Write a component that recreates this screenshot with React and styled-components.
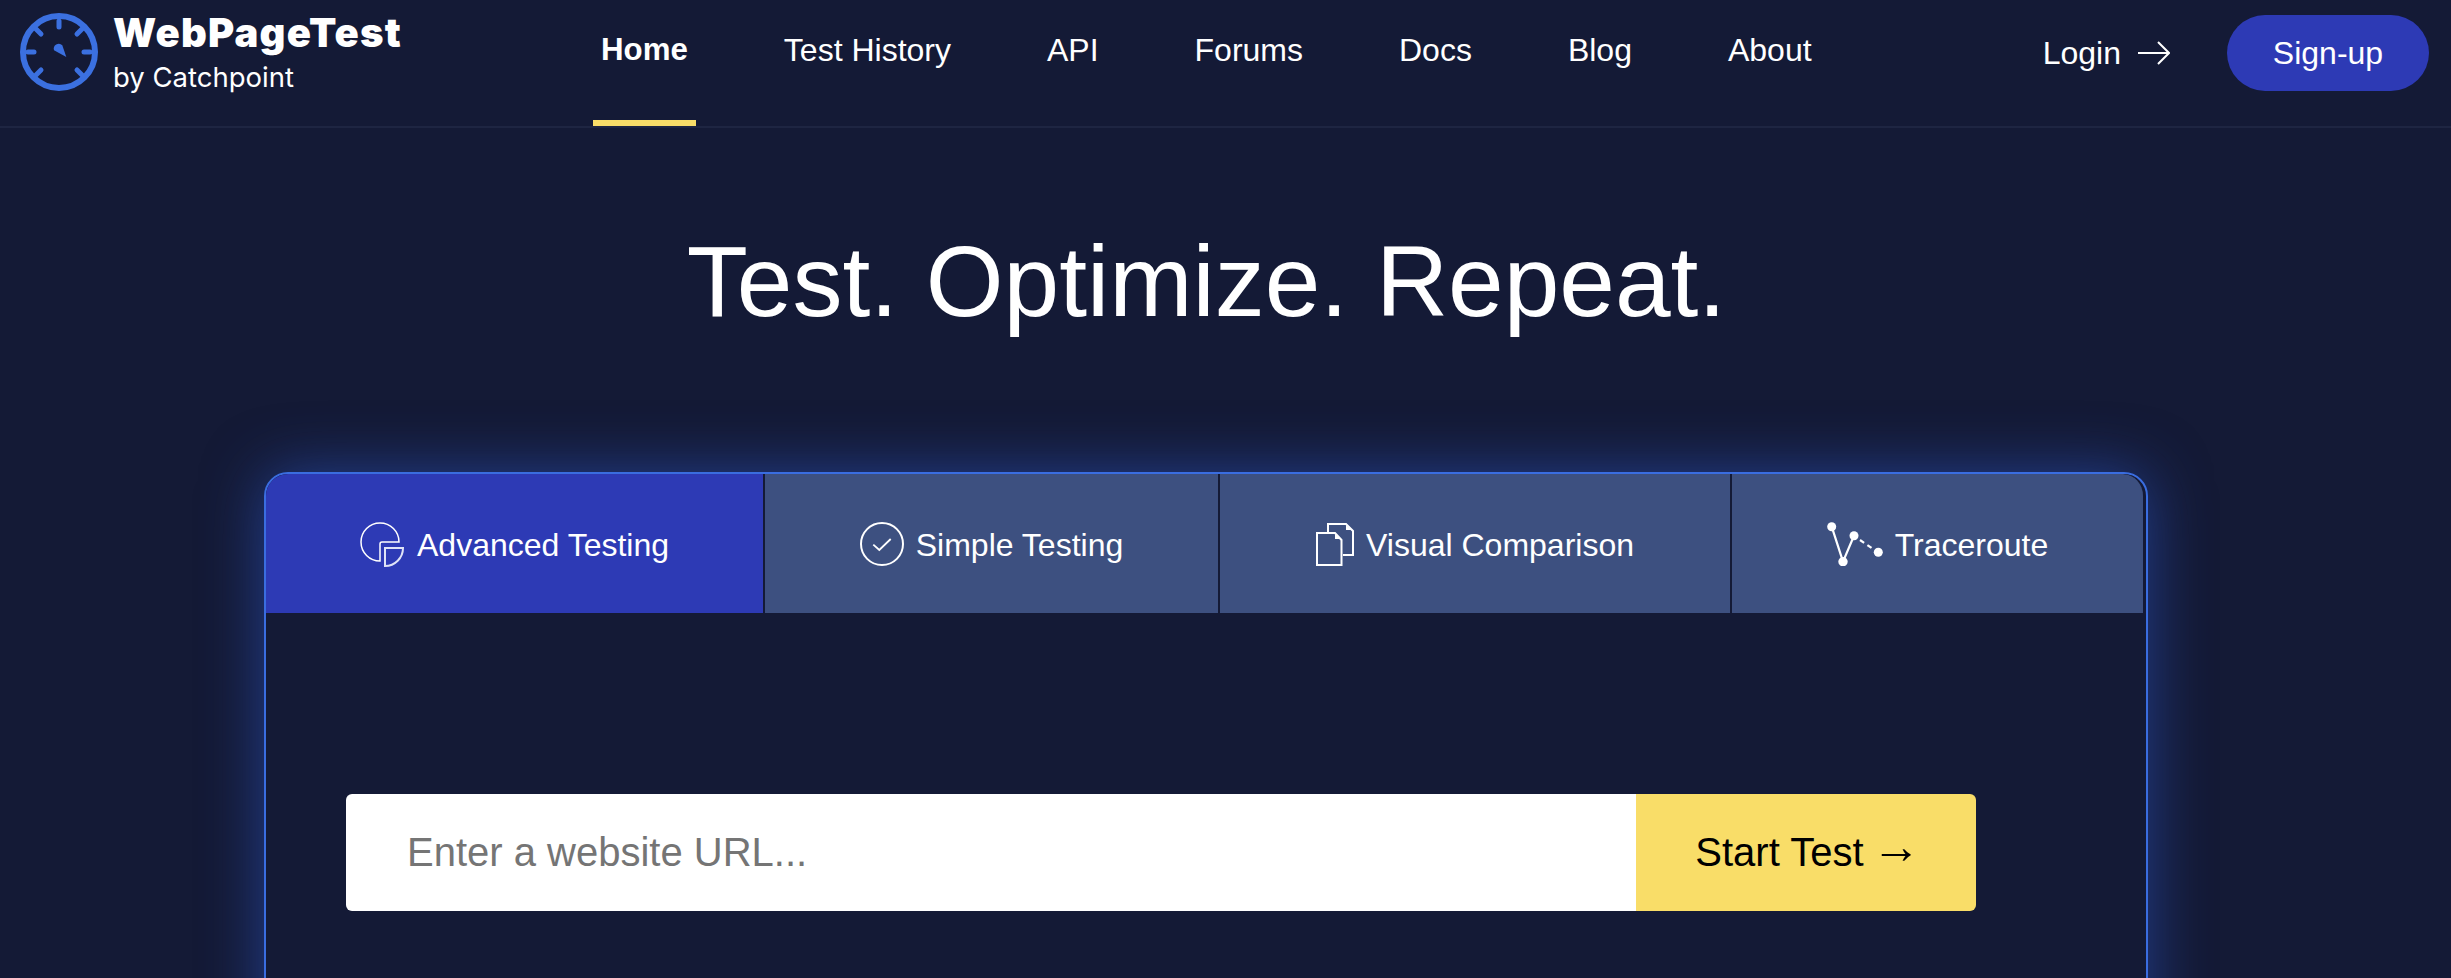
import React from 'react'
import styled, { createGlobalStyle } from 'styled-components'

const GlobalStyle = createGlobalStyle`
  html, body {
    margin: 0;
    padding: 0;
    background: #141a36;
  }
`

const Page = styled.div`
  height: 100vh;
  overflow: hidden;
  background: #141a36;
  color: #fff;
  font-family: "Liberation Sans", Arial, sans-serif;
`

const Header = styled.header`
  height: 126px;
  display: flex;
  align-items: stretch;
  padding: 0 22px 0 20px;
  border-bottom: 2px solid #1e2542;
`

const Brand = styled.a`
  width: 573px;
  display: flex;
  gap: 15px;
  padding-top: 13px;
  box-sizing: border-box;
`

const BrandText = styled.div`
  display: flex;
  flex-direction: column;
  gap: 9px;
`

const BrandName = styled.span`
  font-family: Inter, sans-serif;
  font-weight: 900;
  font-size: 40px;
  letter-spacing: 1.2px;
  line-height: 39px;
  white-space: nowrap;
`

const BrandSub = styled.span`
  font-family: Inter, sans-serif;
  font-size: 27.5px;
  line-height: 32px;
  white-space: nowrap;
`

const Nav = styled.nav`
  display: flex;
  gap: 80px;
`

const NavItem = styled.a`
  padding: 0 8px 20px;
  display: flex;
  align-items: center;
  box-sizing: border-box;
  font-size: ${p => (p.$active ? '31.25px' : '32px')};
  font-weight: ${p => (p.$active ? 700 : 400)};
  border-bottom: 6px solid ${p => (p.$active ? '#f9dd68' : 'transparent')};
`

const Account = styled.div`
  margin-left: auto;
  display: flex;
  align-items: center;
  gap: 57px;
  font-size: 32px;
  padding-bottom: 20px;
`

const Login = styled.a`
  display: flex;
  align-items: center;
  gap: 17px;
`

const SignUp = styled.a`
  width: 202px;
  height: 76px;
  border-radius: 38px;
  background: #2d3ab5;
  display: flex;
  align-items: center;
  justify-content: center;
`

const Hero = styled.h1`
  margin: 0;
  padding: 96px 38px 0 0;
  text-align: center;
  font-weight: 400;
  font-size: 100px;
  line-height: 115px;
`

const Card = styled.section`
  width: 1884px;
  height: 700px;
  box-sizing: border-box;
  margin: 133px 0 0 264px;
  border: 2px solid #3a6de0;
  border-radius: 24px;
  background: #141a36;
  box-shadow: 0 0 60px rgba(50, 100, 230, 0.5);
`

const Tabs = styled.div`
  display: grid;
  grid-template-columns: 499px 455px 512px 413px;
  height: 139px;
`

const Tab = styled.a`
  display: flex;
  align-items: center;
  justify-content: center;
  gap: 12px;
  padding-top: 1px;
  font-size: 32px;
  background: ${p => (p.$active ? '#2d3ab5' : '#3d5080')};
  border-right: 2px solid #141a36;
  &:first-child { border-top-left-radius: 22px; }
  &:last-child { border-top-right-radius: 22px; }
`

const TabLabel = styled.span`
  padding-top: 2px;
`

const UrlForm = styled.form`
  display: flex;
  height: 117px;
  margin: 181px 0 0 80px;
  width: 1630px;
`

const UrlInput = styled.input`
  flex: 1;
  min-width: 0;
  border: 0;
  outline: 0;
  padding: 0 0 0 61px;
  border-radius: 6px 0 0 6px;
  background: #fff;
  font-family: inherit;
  font-size: 40px;
  &::placeholder { color: #757575; opacity: 1; }
`

const StartButton = styled.button`
  width: 340px;
  border: 0;
  border-radius: 0 6px 6px 0;
  background: #f9dd68;
  color: #000;
  font-family: inherit;
  font-size: 40px;
`

const ButtonArrow = styled.span`
  font-family: "Liberation Serif", serif;
  font-size: 49px;
  line-height: 0;
  vertical-align: 3px;
  margin: 0 -4px 0 -3px;
`

const Gauge = () => (
  <svg width="78" height="78" viewBox="0 0 78 78" fill="none" stroke="#3b70e0" strokeWidth="5" strokeLinecap="round">
    <circle cx="39" cy="39" r="36" strokeWidth="6" />
    <path d="M39 8v6M8 39h6M64 39h6M15 15l6 6M63 15l-6 6M15 63l6-6M63 63l-6-6" />
    <path d="M42.300 32.300L46.300 44L34 37.300A5 5 0 0 1 42.300 32.300z" fill="#3b70e0" stroke="none" />
  </svg>
)

const LoginArrow = () => (
  <svg width="32" height="24" viewBox="0 0 32 24" fill="none" stroke="#fff" strokeWidth="2">
    <path d="M0 12h30M20 1l11 11-11 11" />
  </svg>
)

const PieIcon = () => (
  <svg width="45" height="45" viewBox="0 0 45 45" fill="none" stroke="#fff" strokeWidth="1.5">
    <path d="M39 20A19 19 0 1 0 20 39V22a2 2 0 0 1 2-2z" />
    <path d="M25 26H43A18 18 0 0 1 25 44z" stroke="#dfe3f7" strokeWidth="2" />
  </svg>
)

const CheckIcon = () => (
  <svg width="44" height="44" viewBox="0 0 44 44" fill="none" stroke="#fff" strokeWidth="2">
    <circle cx="22" cy="22" r="21" />
    <path d="M13.300 22.700L19.300 28L30.700 17" strokeWidth="1.800" />
  </svg>
)

const PagesIcon = () => (
  <svg width="38" height="43" viewBox="0 0 38 43" fill="none" stroke="#fff" strokeWidth="2">
    <path d="M12 9V1H30L37 8V32H27" />
    <path d="M1 10H19L25.500 17V42H1Z" />
    <path d="M30 2V7H35.500ZM19 11V16H24.500Z" fill="#fff" stroke="none" />
  </svg>
)

const RouteIcon = () => (
  <svg width="56" height="44" viewBox="0 0 56 44" fill="#fff" stroke="none">
    <circle cx="4.700" cy="4.700" r="4.500" />
    <circle cx="27" cy="13.700" r="4.500" />
    <circle cx="16" cy="39.700" r="4.700" />
    <circle cx="51.300" cy="30.300" r="4.500" />
    <path d="M4.700 4.700L16 39.700L27 13.700" fill="none" stroke="#fff" strokeWidth="2.200" />
    <path d="M33 18L46 27" fill="none" stroke="#fff" strokeWidth="2.200" strokeDasharray="5 4" />
  </svg>
)

const navItems = ['Test History', 'API', 'Forums', 'Docs', 'Blog', 'About']

const tabs = [
  { label: 'Advanced Testing', icon: <PieIcon />, active: true },
  { label: 'Simple Testing', icon: <CheckIcon /> },
  { label: 'Visual Comparison', icon: <PagesIcon /> },
  { label: 'Traceroute', icon: <RouteIcon /> },
]

export default function App() {
  return (
    <Page>
      <GlobalStyle />
      <Header>
        <Brand>
          <Gauge />
          <BrandText>
            <BrandName>WebPageTest</BrandName>
            <BrandSub>by Catchpoint</BrandSub>
          </BrandText>
        </Brand>
        <Nav>
          <NavItem $active>Home</NavItem>
          {navItems.map(item => (
            <NavItem key={item}>{item}</NavItem>
          ))}
        </Nav>
        <Account>
          <Login>Login <LoginArrow /></Login>
          <SignUp>Sign-up</SignUp>
        </Account>
      </Header>
      <Hero>Test. Optimize. Repeat.</Hero>
      <Card>
        <Tabs>
          {tabs.map(tab => (
            <Tab key={tab.label} $active={tab.active}>
              {tab.icon}
              <TabLabel>{tab.label}</TabLabel>
            </Tab>
          ))}
        </Tabs>
        <UrlForm>
          <UrlInput placeholder="Enter a website URL..." />
          <StartButton type="button">Start Test <ButtonArrow>→</ButtonArrow></StartButton>
        </UrlForm>
      </Card>
    </Page>
  )
}
